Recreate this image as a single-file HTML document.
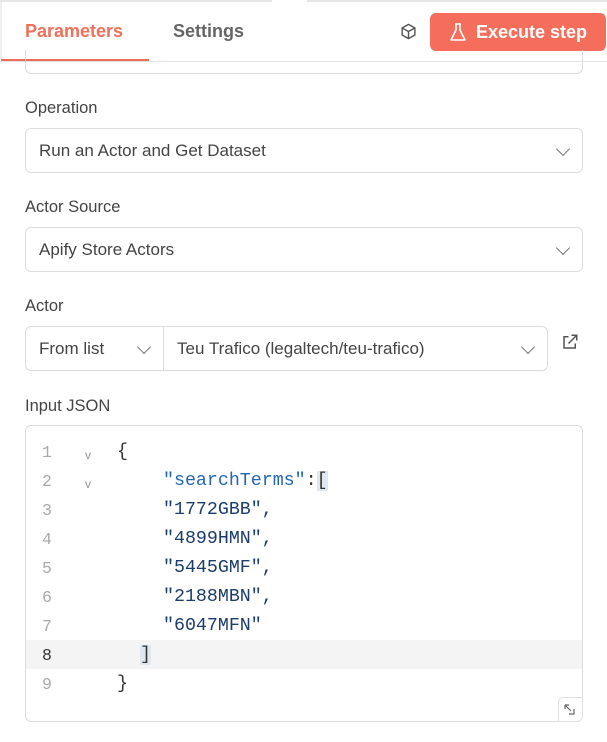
<!DOCTYPE html>
<html><head><style>
*{box-sizing:border-box;margin:0;padding:0}
body{width:607px;height:742px;background:#fff;font-family:"Liberation Sans",sans-serif;position:relative;overflow:hidden;color:#333}
.a{position:absolute}
.lbl{position:absolute;left:25px;font-size:16.5px;color:#444}
.sel{position:absolute;border:1px solid #dcdcdc;border-radius:6px;font-size:17px;color:#444;padding-left:13px;display:flex;align-items:center}
.chev{position:absolute;right:14px;top:50%;width:10px;height:10px;border-right:1.3px solid #777;border-bottom:1.3px solid #777;transform:translateY(-70%) rotate(45deg)}
.code{position:absolute;font-family:"Liberation Mono",monospace;font-size:18.3px;white-space:pre}
.ln{position:absolute;left:42px;font-family:"Liberation Mono",monospace;font-size:16.5px;color:#aaa}
</style></head><body>
<div class="a" style="left:0;top:0;width:272px;height:2px;background:#e6e6e6"></div>
<div class="a" style="left:307px;top:0;width:300px;height:2px;background:#e6e6e6"></div>
<div class="a" style="left:0;top:2px;width:2px;height:58px;background:#eee"></div>
<div class="a" style="left:25px;top:21px;font-size:18px;font-weight:bold;color:#f0705a">Parameters</div>
<div class="a" style="left:173px;top:21px;font-size:18px;font-weight:bold;color:#666">Settings</div>
<div class="a" style="left:1px;top:59px;width:148px;height:3px;background:#ec6d57"></div>
<div class="a" style="left:0;top:61px;width:607px;height:1px;background:#e2e2e2"></div>
<svg class="a" style="left:400px;top:23px" width="17" height="17" viewBox="0 0 24 24" fill="none" stroke="#555" stroke-width="2" stroke-linejoin="round"><path d="M12 2 21 7v10l-9 5-9-5V7z"/><path d="M3 7l9 5 9-5M12 12v10"/></svg>
<div class="a" style="left:430px;top:13px;width:176px;height:38px;background:#f56e5c;border-radius:6px;color:#fff;font-size:18px;font-weight:bold;display:flex;align-items:center;padding-left:46px">Execute step</div>
<svg class="a" style="left:449px;top:22px" width="18" height="20" viewBox="0 0 18 20" fill="none" stroke="#fff" stroke-width="1.6" stroke-linejoin="round"><path d="M6 2h6M7 2v6L2 18h14L11 8V2"/></svg>
<div class="a" style="left:25px;top:50px;width:558px;height:24px;border:1px solid #dcdcdc;border-top:none;border-radius:0 0 6px 6px"></div>
<div class="lbl" style="top:99px">Operation</div>
<div class="sel" style="left:25px;top:128px;width:558px;height:45px">Run an Actor and Get Dataset<span class="chev"></span></div>
<div class="lbl" style="top:198px">Actor Source</div>
<div class="sel" style="left:25px;top:227px;width:558px;height:45px">Apify Store Actors<span class="chev"></span></div>
<div class="lbl" style="top:297px">Actor</div>
<div class="sel" style="left:25px;top:326px;width:139px;height:45px;border-radius:6px 0 0 6px">From list<span class="chev"></span></div>
<div class="sel" style="left:163px;top:326px;width:385px;height:45px;border-radius:0 6px 6px 0">Teu Trafico (legaltech/teu-trafico)<span class="chev"></span></div>
<svg class="a" style="left:561px;top:333px" width="18" height="18" viewBox="0 0 24 24" fill="none" stroke="#555" stroke-width="2"><path d="M14 3h7v7M21 3 10 14M19 14v6H4V5h6"/></svg>
<div class="lbl" style="top:397px">Input JSON</div>
<div class="a" style="left:25px;top:425px;width:558px;height:297px;border:1px solid #dcdcdc;border-radius:6px"></div>
<div class="a" style="left:26px;top:640px;width:556px;height:29px;background:#f4f4f4"></div>
<div class="ln" style="top:443px">1</div><div class="ln" style="top:472px">2</div><div class="ln" style="top:501px">3</div><div class="ln" style="top:530px">4</div><div class="ln" style="top:559px">5</div><div class="ln" style="top:588px">6</div><div class="ln" style="top:617px">7</div><div class="ln" style="top:646px;color:#333">8</div><div class="ln" style="top:675px">9</div>
<div class="a" style="left:85px;top:448px;font-size:12px;color:#999">v</div>
<div class="a" style="left:85px;top:477px;font-size:12px;color:#999">v</div>
<div class="code" style="left:117px;top:442px;color:#333">{</div>
<div class="code" style="left:163px;top:471px"><span style="color:#2367b3">"searchTerms"</span><span style="color:#333">:</span><span style="background:#dfe8f0;color:#333">[</span></div>
<div class="code" style="left:163px;top:500px;color:#1c3d6b">"1772GBB",</div>
<div class="code" style="left:163px;top:529px;color:#1c3d6b">"4899HMN",</div>
<div class="code" style="left:163px;top:558px;color:#1c3d6b">"5445GMF",</div>
<div class="code" style="left:163px;top:587px;color:#1c3d6b">"2188MBN",</div>
<div class="code" style="left:163px;top:616px;color:#1c3d6b">"6047MFN"</div>
<div class="code" style="left:140px;top:645px;color:#333"><span style="background:#dfe8f0">]</span></div>
<div class="code" style="left:117px;top:674px;color:#333">}</div>
<div class="a" style="left:558px;top:697px;width:25px;height:25px;border:1px solid #e0e0e0;border-radius:5px 0 6px 0;background:#fff"></div>
<svg class="a" style="left:563px;top:703px" width="13" height="13" viewBox="0 0 13 13" fill="none" stroke="#666" stroke-width="1.2"><path d="M2 2l6 6M2 2v4M2 2h4M6 11h5V6"/></svg>
</body></html>
